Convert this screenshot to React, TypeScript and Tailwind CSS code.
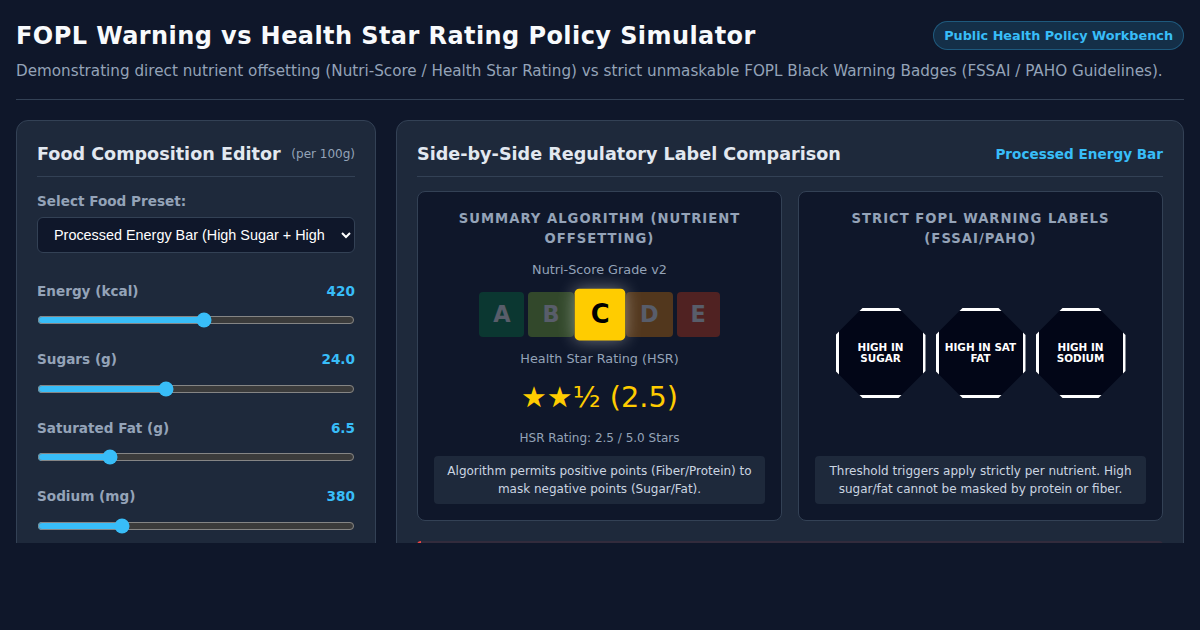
const sliders = [
  { label: "Energy (kcal)", value: 420, shown: "420", max: 800 },
  { label: "Sugars (g)", value: 24, shown: "24.0", max: 60 },
  { label: "Saturated Fat (g)", value: 6.5, shown: "6.5", max: 30 },
  { label: "Sodium (mg)", value: 380, shown: "380", max: 1500 },
];

const grades = [
  { letter: "A", className: "bg-[#038141] text-white opacity-30" },
  { letter: "B", className: "bg-[#85bb2f] text-white opacity-30" },
  { letter: "C", className: "z-10 scale-[1.15] bg-[#ffcc00] text-black shadow-[0_0_15px_rgba(255,255,255,0.4)]" },
  { letter: "D", className: "bg-[#ee8100] text-white opacity-30" },
  { letter: "E", className: "bg-[#e63e11] text-white opacity-30" },
];

const badges = ["HIGH IN SUGAR", "HIGH IN SAT FAT", "HIGH IN SODIUM"];

const App = () => {
  return (
    <div className="h-[630px] overflow-hidden bg-[#0f172a] px-4 font-['DejaVu_Sans',sans-serif] text-[#f8fafc] [color-scheme:dark]">
      <header className="h-[100px] border-b border-[#334155] pt-4">
        <div className="flex h-[39px] items-center justify-between">
          <h1 className="text-[24px] leading-[38px] font-bold tracking-[0.42px]">FOPL Warning vs Health Star Rating Policy Simulator</h1>
          <span className="rounded-full border border-[#38bdf84d] bg-[#38bdf826] px-[10px] py-[5px] text-[12.8px] leading-[17px] font-bold text-[#38bdf8]">
            Public Health Policy Workbench
          </span>
        </div>
        <p className="mt-1 text-[15.2px] leading-6 text-[#94a3b8]">
          Demonstrating direct nutrient offsetting (Nutri-Score / Health Star Rating) vs strict unmaskable FOPL Black Warning Badges (FSSAI / PAHO Guidelines).
        </p>
      </header>

      <main className="mt-5 flex h-[423px] items-start gap-5 overflow-hidden">
        <section className="h-[500px] w-[360px] shrink-0 rounded-xl border border-[#334155] bg-[#1e293b] p-5">
          <div className="flex items-center justify-between border-b border-[#334155] pb-[9px]">
            <h2 className="text-[17.6px] leading-[26px] font-bold text-[#e2e8f0]">Food Composition Editor</h2>
            <span className="text-[12px] text-[#94a3b8]">(per 100g)</span>
          </div>

          <label className="mt-[14px] block text-[13.6px] leading-[20px] font-bold text-[#94a3b8]">Select Food Preset:</label>
          <select className="mt-[6px] h-9 w-full rounded-md border border-[#334155] bg-[#0f172a] px-3 font-['Liberation_Sans',sans-serif] text-[14.4px] text-white">
            <option>Processed Energy Bar (High Sugar + High Sat Fat)</option>
          </select>

          <div className="mt-7 flex flex-col gap-[21.05px]">
            {sliders.map((item) => (
              <div key={item.label}>
                <div className="flex items-center justify-between text-[13.6px] leading-5 font-bold">
                  <span className="text-[#94a3b8]">{item.label}</span>
                  <span className="text-[#38bdf8]">{item.shown}</span>
                </div>
                <input
                  type="range"
                  min={0}
                  max={item.max}
                  defaultValue={item.value}
                  step="any"
                  className="mt-[11.4px] block h-4 w-full accent-[#38bdf8]"
                />
              </div>
            ))}
          </div>
        </section>

        <section className="h-[500px] min-w-0 flex-1 rounded-xl border border-[#334155] bg-[#1e293b] p-5">
          <div className="flex items-center justify-between border-b border-[#334155] pb-[9px]">
            <h2 className="text-[17.6px] leading-[26px] font-bold text-[#e2e8f0]">Side-by-Side Regulatory Label Comparison</h2>
            <span className="text-[13.6px] font-bold text-[#38bdf8]">Processed Energy Bar</span>
          </div>

          <div className="mt-[14px] grid grid-cols-2 gap-4">
            <div className="flex h-[330px] flex-col items-center rounded-lg border border-[#334155] bg-[#0f172a] p-4 text-center">
              <h3 className="pt-px text-[13.2px] leading-5 font-bold tracking-[1px] text-[#94a3b8]">SUMMARY ALGORITHM (NUTRIENT OFFSETTING)</h3>
              <p className="mt-3 text-[12.8px] leading-[18px] text-[#94a3b8]">Nutri-Score Grade v2</p>
              <div className="mt-[13px] flex gap-1">
                {grades.map((grade) => (
                  <div key={grade.letter} className={`flex h-[45px] items-center justify-center rounded-[4px] px-[14px] text-[22.4px] font-bold ${grade.className}`}>
                    {grade.letter}
                  </div>
                ))}
              </div>
              <p className="mt-[13px] text-[12.8px] leading-[18px] text-[#94a3b8]">Health Star Rating (HSR)</p>
              <div className="mt-[9px] text-[28.8px] leading-[40px] text-[#ffcc00]">★★½ (2.5)</div>
              <p className="mt-3 text-[12px] leading-[18px] text-[#94a3b8]">HSR Rating: 2.5 / 5.0 Stars</p>
              <p className="mt-[9px] w-full rounded bg-[#1e293b] px-3 py-[6px] text-[12px] leading-[18px] text-[#cbd5e1]">
                Algorithm permits positive points (Fiber/Protein) to mask negative points (Sugar/Fat).
              </p>
            </div>

            <div className="flex h-[330px] flex-col items-center rounded-lg border border-[#334155] bg-[#0f172a] p-4 text-center">
              <h3 className="pt-px text-[13.2px] leading-5 font-bold tracking-[1px] text-[#94a3b8]">STRICT FOPL WARNING LABELS (FSSAI/PAHO)</h3>
              <div className="flex flex-1 items-center justify-center gap-[10px] pt-px">
                {badges.map((badge) => (
                  <div
                    key={badge}
                    className="flex size-[90px] items-center justify-center border-[3px] border-white bg-[#020617] p-1 text-[10.4px] leading-[11px] font-bold text-white [clip-path:polygon(30%_0%,70%_0%,100%_30%,100%_70%,70%_100%,30%_100%,0%_70%,0%_30%)]"
                  >
                    {badge}
                  </div>
                ))}
              </div>
              <p className="w-full rounded bg-[#1e293b] px-3 py-[6px] text-[12px] leading-[18px] text-[#cbd5e1]">
                Threshold triggers apply strictly per nutrient. High sugar/fat cannot be masked by protein or fiber.
              </p>
            </div>
          </div>

          <div className="mt-5 h-20 rounded border-l-4 border-[#ef4444] bg-[#ef44441a]" />
        </section>
      </main>
    </div>
  );
};

export default App;
